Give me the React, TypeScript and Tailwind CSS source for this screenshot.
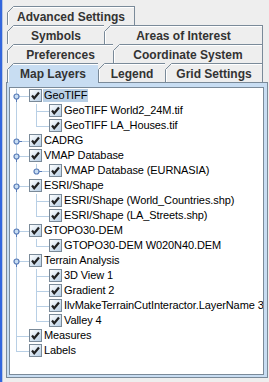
import React from 'react';

type Node = {
  label: string;
  depth: number;
  last?: boolean;
  handle?: 'open' | 'closed';
  selected?: boolean;
};

const rows: Node[] = [
  { label: 'GeoTIFF', depth: 0, handle: 'open', selected: true },
  { label: 'GeoTIFF World2_24M.tif', depth: 1 },
  { label: 'GeoTIFF LA_Houses.tif', depth: 1, last: true },
  { label: 'CADRG', depth: 0, handle: 'closed' },
  { label: 'VMAP Database', depth: 0, handle: 'open' },
  { label: 'VMAP Database (EURNASIA)', depth: 1, handle: 'closed', last: true },
  { label: 'ESRI/Shape', depth: 0, handle: 'open' },
  { label: 'ESRI/Shape (World_Countries.shp)', depth: 1 },
  { label: 'ESRI/Shape (LA_Streets.shp)', depth: 1, last: true },
  { label: 'GTOPO30-DEM', depth: 0, handle: 'open' },
  { label: 'GTOPO30-DEM W020N40.DEM', depth: 1, last: true },
  { label: 'Terrain Analysis', depth: 0, handle: 'open' },
  { label: '3D View 1', depth: 1 },
  { label: 'Gradient 2', depth: 1 },
  { label: 'IlvMakeTerrainCutInteractor.LayerName 3', depth: 1 },
  { label: 'Valley 4', depth: 1, last: true },
  { label: 'Measures', depth: 0 },
  { label: 'Labels', depth: 0, last: true },
];

const tabRows = [
  [{ label: 'Advanced Settings', w: 'w-[128px]' }],
  [
    { label: 'Symbols', w: 'w-[98px]' },
    { label: 'Areas of Interest', w: 'w-[158px]' },
  ],
  [
    { label: 'Preferences', w: 'w-[107px]' },
    { label: 'Coordinate System', w: 'w-[149px]' },
  ],
  [
    { label: 'Map Layers', w: 'w-[92px]', selected: true },
    { label: 'Legend', w: 'w-[67px]' },
    { label: 'Grid Settings', w: 'w-[97px]' },
  ],
];

function Corner() {
  // slanted top-left corner of a Metal tab
  return (
    <svg width="7" height="7" viewBox="0 0 7 7" className="absolute left-[-1px] top-[-1px]">
      <polygon points="0,0 7,0 0,7" fill="#eeeeee" />
      <line x1="0.5" y1="6.5" x2="6.5" y2="0.5" stroke="#7a8a99" strokeWidth="1" />
    </svg>
  );
}

function Tab({ label, w, selected, first }: { label: string; w: string; selected?: boolean; first?: boolean }) {
  return (
    <div
      className={`relative ${w} h-[19px] flex items-center justify-center border-t border-r border-[#7a8a99] ${
        first ? 'border-l' : ''
      } ${selected ? 'bg-[#c8ddf2]' : 'bg-[#eeeeee]'} shadow-[inset_1px_1px_0_#ffffff]`}
    >
      <Corner />
      <span className="text-[12px] font-bold text-[#333333] leading-none pt-[1px]">{label}</span>
    </div>
  );
}

function CheckBox() {
  return (
    <div className="w-[13px] h-[13px] shrink-0 border border-[#7a8a99] bg-gradient-to-br from-[#ffffff] to-[#b8cfe5] flex items-center justify-center">
      <svg width="11" height="11" viewBox="0 0 11 11">
        <path d="M2 5.5 L4.2 8.2 L9 2.5" fill="none" stroke="#222222" strokeWidth="2.2" />
      </svg>
    </div>
  );
}

function Handle({ open, x }: { open: boolean; x: number }) {
  return (
    <svg width="11" height="11" viewBox="0 0 11 11" className="absolute top-[2px]" style={{ left: x - 5 }}>
      <circle cx="5.5" cy="5.5" r="2.5" fill="#c8ddf2" stroke="#5a7cb8" strokeWidth="1.2" />
      {open ? (
        <line x1="5.5" y1="8" x2="5.5" y2="11" stroke="#5a7cb8" />
      ) : (
        <line x1="8" y1="5.5" x2="11" y2="5.5" stroke="#5a7cb8" />
      )}
    </svg>
  );
}

function TreeRow({ node }: { node: Node }) {
  const x = 6 + 20 * node.depth;
  return (
    <div className="relative h-[15px]">
      {node.depth > 0 && <div className="absolute left-[6px] top-0 w-px h-[15px] bg-[#b8cfe5]" />}
      <div className={`absolute top-0 w-px bg-[#b8cfe5] ${node.last ? 'h-[8px]' : 'h-[15px]'}`} style={{ left: x }} />
      <div className="absolute top-[7px] h-px w-[13px] bg-[#b8cfe5]" style={{ left: x }} />
      {node.handle && <Handle open={node.handle === 'open'} x={x} />}
      <div className="flex items-center h-[13px]" style={{ paddingLeft: x + 13 }}>
        <CheckBox />
        <span
          className={`ml-[1px] px-[1px] h-[13px] leading-[13px] whitespace-nowrap text-[11px] tracking-[-0.1px] text-black ${
            node.selected ? 'bg-[#b8cfe5]' : ''
          }`}
        >
          {node.label}
        </span>
      </div>
    </div>
  );
}

export default function App() {
  return (
    <div className="w-[269px] h-[382px] bg-[#eeeeee] flex overflow-hidden font-['Liberation_Sans',Arial,sans-serif]">
      {/* window edge */}
      <div className="w-[2px] h-full bg-[#3366dd]" />
      <div className="w-[1px] h-full bg-[#b6c6e2]" />
      <div className="w-[3px] h-full" />

      <div className="w-[262px] flex flex-col pt-[6px]">
        {/* tab rows */}
        <div className="pl-[1px] flex flex-col">
          {tabRows.map((row, i) => (
            <div key={i} className="flex">
              {row.map((t, j) => (
                <Tab key={t.label} label={t.label} w={t.w} selected={'selected' in t && !!t.selected} first={j === 0} />
              ))}
            </div>
          ))}
        </div>

        {/* top edge of the content, open under the selected tab */}
        <div className="flex h-px">
          <div className="w-[2px] bg-[#7a8a99]" />
          <div className="w-[90px] bg-[#c8ddf2]" />
          <div className="flex-1 bg-[#7a8a99]" />
        </div>

        <div className="flex-1 mb-[4px] border-l border-r border-b border-[#7a8a99] bg-[#c8ddf2] pt-[4px] pl-[2px] pr-[3px] pb-[2px] flex">
          <div className="flex-1 border border-[#7a8a99] bg-white pt-[1px] overflow-hidden">
            {rows.map((n) => (
              <TreeRow key={n.label} node={n} />
            ))}
          </div>
        </div>
      </div>
    </div>
  );
}
